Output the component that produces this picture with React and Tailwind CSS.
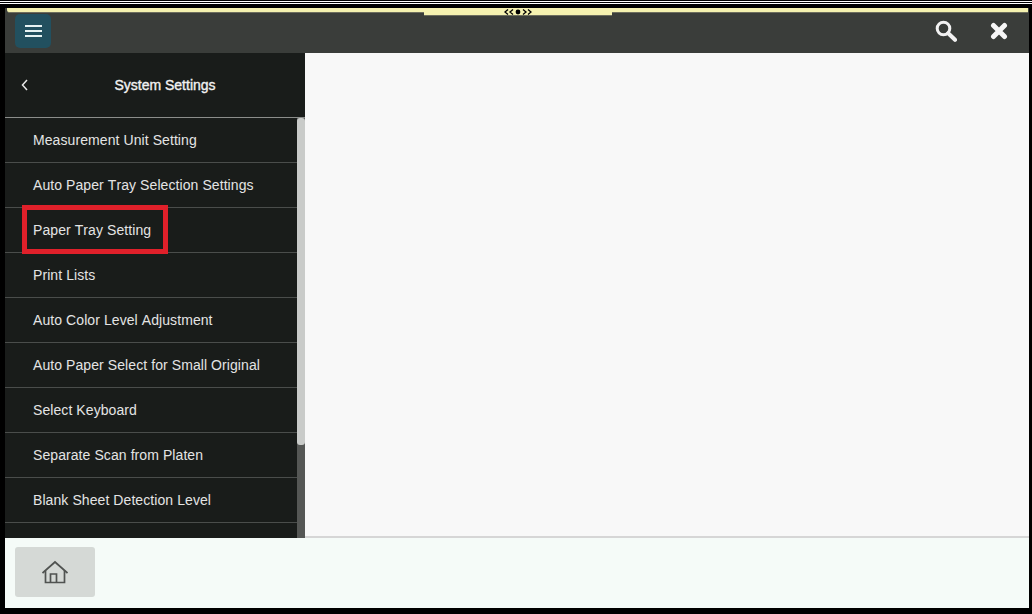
const items = [
  'Measurement Unit Setting',
  'Auto Paper Tray Selection Settings',
  'Paper Tray Setting',
  'Print Lists',
  'Auto Color Level Adjustment',
  'Auto Paper Select for Small Original',
  'Select Keyboard',
  'Separate Scan from Platen',
  'Blank Sheet Detection Level',
];

function HomeIcon() {
  return (
    <svg width="26" height="24" viewBox="0 0 26 24" fill="none" stroke="#505351" strokeWidth="1.7">
      <path d="M0.5 13 L13 2 L25.5 13" />
      <path d="M3.5 10.5 V22.5 H22.5 V10.5" />
      <path d="M8.5 22.5 V14 H14.5 V22.5" />
    </svg>
  );
}

function SearchIcon() {
  return (
    <svg width="22" height="22" viewBox="0 0 22 22" fill="none" stroke="#f2f2f2">
      <circle cx="8.5" cy="8.5" r="6.3" strokeWidth="3" />
      <path d="M13.2 13.2 L20 19.8" strokeWidth="4" strokeLinecap="round" />
    </svg>
  );
}

function CloseIcon() {
  return (
    <svg width="18" height="18" viewBox="0 0 18 18" fill="none" stroke="#f6f6f6" strokeWidth="5" strokeLinecap="round">
      <path d="M3.5 3.5 L14.5 14.5 M14.5 3.5 L3.5 14.5" />
    </svg>
  );
}

function DragHandle() {
  return (
    <svg width="28" height="6" viewBox="0 0 28 6" fill="none" stroke="#000" strokeWidth="1.3">
      <path d="M4 0.5 L1 3 L4 5.5 M9 0.5 L6 3 L9 5.5" />
      <path d="M19 0.5 L22 3 L19 5.5 M24 0.5 L27 3 L24 5.5" />
      <circle cx="14" cy="3" r="2.4" fill="#000" stroke="none" />
    </svg>
  );
}

export default function App() {
  return (
    <div className="h-[614px] w-[1032px] overflow-hidden bg-black font-['Liberation_Sans',Arial,sans-serif] flex flex-col">
      {/* double line along the top edge */}
      <div className="mt-px h-px bg-white" />
      <div className="mt-px h-px bg-white" />

      <div className="mt-[4px] ml-[5px] mr-[3px] mb-[6px] flex flex-col flex-1 min-h-0">
        <div className="relative h-[45px] shrink-0 bg-[#3a3d3a] flex items-center justify-between">
          <div className="absolute left-[2px] right-px top-0 h-[5px] bg-[#f5f2b0] rounded-bl-[3px] border-b border-[#6d6e5e]" />
          <div className="absolute top-0 left-[419px] w-[188px] h-[8px] bg-[#f5f2b0] border-b border-[#6d6e5e] flex items-center justify-center">
            <DragHandle />
          </div>
          <button className="ml-[10px] mt-px w-[36px] h-[34px] rounded-[5px] bg-[#22505f] flex flex-col items-center justify-center gap-[3px]">
            <div className="w-[17px] h-[2px] bg-[#e6f2f2]" />
            <div className="w-[17px] h-[2px] bg-[#e6f2f2]" />
            <div className="w-[17px] h-[2px] bg-[#e6f2f2]" />
          </button>
          <div className="flex items-center gap-[33px] mr-[21px]">
            <SearchIcon />
            <CloseIcon />
          </div>
        </div>

        <div className="flex flex-1 min-h-0">
          <div className="w-[300px] flex flex-col bg-[#191c1a]">
            <div className="h-[65px] flex items-center relative border-b border-[#8b8d8b] shrink-0">
              <svg width="8" height="12" viewBox="0 0 8 12" fill="none" stroke="#e8e8e8" strokeWidth="1.5" className="absolute left-[16px] top-[26px]">
                <path d="M6 1 L1.5 6 L6 11" />
              </svg>
              <div className="w-full text-center text-sm text-[#f2f2f2] pl-[20px] [-webkit-text-stroke:0.35px_#f2f2f2]">System Settings</div>
            </div>
            <div className="flex flex-1 min-h-0">
              <div className="w-[292px] overflow-hidden">
                {items.map((item) => (
                  <div key={item} className="h-[45px] border-b border-[#4a4d4b] flex items-center pl-[28px] text-sm tracking-[0.08px] [font-kerning:none] text-[#e4e4e4] relative">
                    {item}
                    {item === 'Paper Tray Setting' && (
                      <div className="absolute left-[17px] top-[-3px] w-[146px] h-[49px] border-[5px] border-[#e0202a]" />
                    )}
                  </div>
                ))}
              </div>
              <div className="w-[8px] bg-[#555755]">
                <div className="h-[327px] bg-[#c9cbc9] rounded-[3px]" />
              </div>
            </div>
          </div>
          <div className="flex-1 bg-[#f8f8f8] border-b-2 border-[#d6d6d6]" />
        </div>

        <div className="h-[70px] shrink-0 bg-[#f5fbf8] pt-[9px] pl-[10px]">
          <button className="w-[80px] h-[50px] rounded-[3px] bg-[#d5d9d6] flex items-center justify-center">
            <HomeIcon />
          </button>
        </div>
      </div>
    </div>
  );
}
